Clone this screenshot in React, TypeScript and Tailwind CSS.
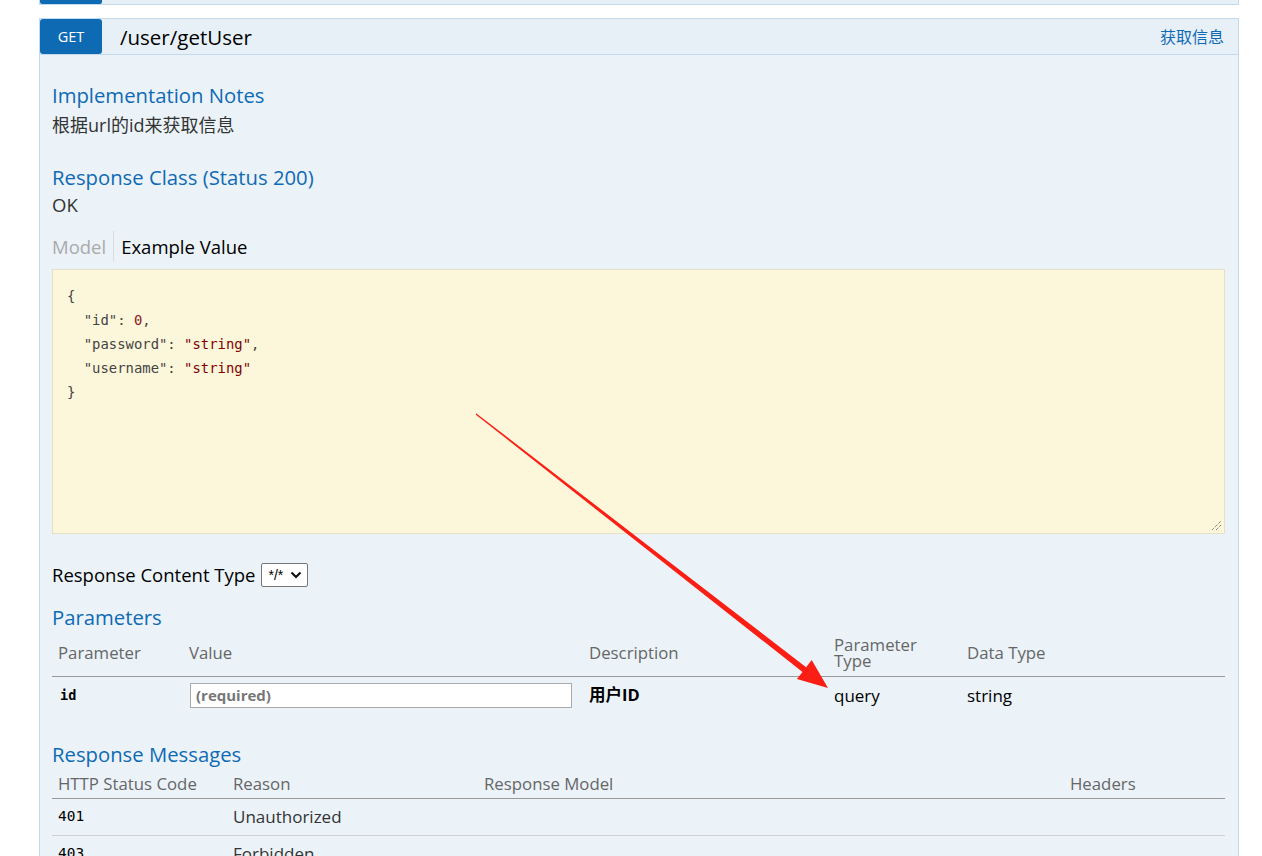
import React from 'react';

const paramCols = ['w-[131px]', 'w-[400px]', 'w-[245px]', 'w-[133px]', 'flex-1'];
const msgCols = ['w-[175px]', 'w-[251px]', 'w-[586px]', 'flex-1'];

const ResizeHandle: React.FC = () => (
  <svg className="absolute right-[2px] bottom-[2px]" width="11" height="11" viewBox="0 0 11 11">
    <path d="M1 10 L10 1 M5 10 L10 5" stroke="#555" strokeWidth="1" strokeDasharray="1 1" />
  </svg>
);

const Arrow: React.FC = () => (
  <svg className="absolute left-0 top-0 pointer-events-none" width="1262" height="856">
    <polygon
      points="476.4,413.5 806.1,667.2 811.7,660.1 828,688 796.9,679.1 802.5,672 475.6,414.5"
      fill="#fa1e14"
    />
  </svg>
);

const App: React.FC = () => {
  return (
    <div className="relative w-[1262px] h-[856px] overflow-hidden bg-white text-[#333] font-['Open_Sans','Noto_Sans_CJK_SC',sans-serif]">
      {/* previous operation (bottom edge) */}
      <div className="ml-[39px] w-[1200px] h-[5px] border-x border-b border-[#c3d9ec] bg-[#e7f0f7]">
        <div className="w-[62px] h-[4px] bg-[#0f6ab4] rounded-b-[2px]"></div>
      </div>

      {/* GET /user/getUser */}
      <div className="ml-[39px] mt-[13px] w-[1200px] border border-[#c3d9ec]">
        <div className="flex items-center h-[36px] bg-[#e7f0f7] border-b border-[#c3d9ec] pr-[14px]">
          <div className="w-[62px] h-[35px] bg-[#0f6ab4] rounded-[3px] flex items-center justify-center text-white text-[14.5px]">
            GET
          </div>
          <div className="ml-[18px] text-[20.5px] text-black leading-[26px]">/user/getUser</div>
          <div className="ml-auto text-[16px] text-[#0f6ab4]">获取信息</div>
        </div>

        <div className="bg-[#ebf3f9] pl-[12px] pr-[13px] pt-[27px] pb-[20px]">
          <h4 className="text-[20.3px] leading-[26px] text-[#0f6ab4]">Implementation Notes</h4>
          <p className="mt-[6px] text-[18px] leading-[22px]">根据url的id来获取信息</p>

          <h4 className="mt-[28px] text-[20.3px] leading-[26px] text-[#0f6ab4]">Response Class (Status 200)</h4>
          <p className="mt-[4px] text-[18.5px] leading-[22px]">OK</p>

          <div className="mt-[15px] flex items-stretch h-[31px] text-[18.5px]">
            <span className="flex items-center pr-[7px] border-r border-[#dcdcdc] text-[#aaa]">Model</span>
            <span className="flex items-center pl-[7px] text-black">Example Value</span>
          </div>

          <div className="relative mt-[7px] h-[265px] border border-[#e5e0c6] bg-[#fcf6db] pt-[14px] pl-[14px] font-['DejaVu_Sans_Mono',monospace] text-[13.9px] leading-[24px] text-[#444] whitespace-pre">
            <div>{'{'}</div>
            <div>
              {'  "id": '}
              <span className="text-[#8b1a1a]">0</span>,
            </div>
            <div>
              {'  "password": '}
              <span className="text-[#800000]">"string"</span>,
            </div>
            <div>
              {'  "username": '}
              <span className="text-[#800000]">"string"</span>
            </div>
            <div>{'}'}</div>
            <ResizeHandle />
          </div>

          <div className="mt-[29px] flex items-center h-[24px] text-[18.5px] text-black">
            <span>Response Content Type</span>
            <div className="ml-[6px] w-[47px] h-[24px] bg-white border border-[#767676] rounded-[2px] flex items-center pl-[6px] text-[14px] font-['Liberation_Sans',sans-serif]">
              <span>*/*</span>
              <svg className="ml-auto mr-[5px]" width="12" height="8" viewBox="0 0 12 8">
                <path d="M1.5 1.5 L6 6 L10.5 1.5" fill="none" stroke="#111" strokeWidth="2.2" />
              </svg>
            </div>
          </div>

          <h4 className="mt-[17px] text-[20.3px] leading-[26px] text-[#0f6ab4]">Parameters</h4>

          <div className="flex items-center h-[47px] border-b border-[#999] text-[16.8px] text-[#666] leading-[16.5px]">
            <div className={`${paramCols[0]} px-[6px]`}>Parameter</div>
            <div className={`${paramCols[1]} px-[6px]`}>Value</div>
            <div className={`${paramCols[2]} px-[6px]`}>Description</div>
            <div className={`${paramCols[3]} px-[6px]`}>
              Parameter
              <br />
              Type
            </div>
            <div className={`${paramCols[4]} px-[6px]`}>Data Type</div>
          </div>
          <div className="flex items-center h-[37px] text-[17px] text-black">
            <div className={`${paramCols[0]} px-[8px] font-['DejaVu_Sans_Mono',monospace] text-[13.5px] font-bold`}>id</div>
            <div className={`${paramCols[1]} pl-[7px]`}>
              <div className="w-[382px] h-[25px] bg-white border border-[#aaa] flex items-center pl-[5px] text-[15px] font-bold text-[#777]">
                (required)
              </div>
            </div>
            <div className={`${paramCols[2]} px-[6px] font-bold text-[16.5px]`}>用户ID</div>
            <div className={`${paramCols[3]} px-[6px]`}>query</div>
            <div className={`${paramCols[4]} px-[6px]`}>string</div>
          </div>

          <h4 className="mt-[27px] text-[20.3px] leading-[26px] text-[#0f6ab4]">Response Messages</h4>

          <div className="flex h-[32px] pt-[6px] leading-[22px] border-b border-[#999] text-[16.8px] text-[#666]">
            <div className={`${msgCols[0]} px-[6px]`}>HTTP Status Code</div>
            <div className={`${msgCols[1]} px-[6px]`}>Reason</div>
            <div className={`${msgCols[2]} px-[6px]`}>Response Model</div>
            <div className={`${msgCols[3]} px-[6px]`}>Headers</div>
          </div>
          {[
            ['401', 'Unauthorized'],
            ['403', 'Forbidden'],
            ['404', 'Not Found'],
          ].map(([code, reason]) => (
            <div key={code} className="flex items-center h-[37px] border-b border-[#d0d0d0] text-[17px] text-[#333]">
              <div className={`${msgCols[0]} px-[6px] font-['DejaVu_Sans_Mono',monospace] text-[14.5px] text-black`}>{code}</div>
              <div className={`${msgCols[1]} px-[6px]`}>{reason}</div>
              <div className={`${msgCols[2]} px-[6px]`}></div>
              <div className={`${msgCols[3]} px-[6px]`}></div>
            </div>
          ))}
        </div>
      </div>

      <Arrow />
    </div>
  );
};

export default App;
